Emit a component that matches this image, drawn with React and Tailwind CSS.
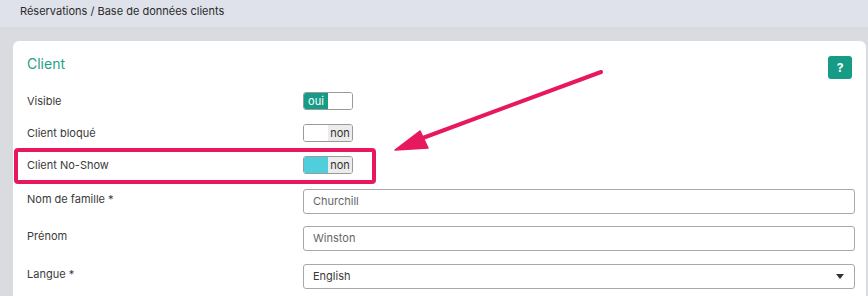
// Client form with annotation overlay (No-Show highlight + arrow)

function Toggle({ on, color, label }) {
  return (
    <div className="flex h-[18px] w-[50px] overflow-hidden rounded-[3px] border border-[#9a9a9a] text-[11px] leading-none">
      {on ? (
        <>
          <div className="flex w-1/2 items-center justify-center bg-[#169c86] text-white">{label}</div>
          <div className="w-1/2 bg-white" />
        </>
      ) : (
        <>
          <div className={`w-1/2 ${color}`} />
          <div className="flex w-1/2 items-center justify-center bg-[#ececec] text-[#333]">{label}</div>
        </>
      )}
    </div>
  );
}

function ToggleRow({ label, children }) {
  return (
    <div className="flex h-[32px] items-center">
      <div className="w-[276px] text-[11px] text-[#3a3a3a]">{label}</div>
      {children}
    </div>
  );
}

function InputRow({ label, value, select, className }) {
  return (
    <div className={`flex items-start ${className}`}>
      <div className="w-[276px] pt-[2px] text-[11px] text-[#3a3a3a]">{label}</div>
      <div className="flex h-[25px] flex-1 items-center justify-between rounded-[3px] border border-[#a8a8a8] bg-white pl-[9px] pr-[10px] text-[11px] text-[#666]">
        <span className={select ? 'text-[#3a3a3a]' : ''}>{value}</span>
        {select && (
          <svg width="8" height="5" viewBox="0 0 8 5">
            <path d="M0 0 L8 0 L4 5 Z" fill="#333" />
          </svg>
        )}
      </div>
    </div>
  );
}

export default function App() {
  return (
    <div className="relative h-[296px] w-[868px] overflow-hidden bg-[#d9dbe0] font-['Inter','Liberation_Sans',sans-serif]">
      {/* Breadcrumb bar */}
      <div className="flex h-[27px] items-center bg-[#dfe2ea] px-[20px] pb-[5px] text-[11px] text-[#2b2b2b]">
        Réservations / Base de données clients
      </div>

      {/* Card */}
      <div className="ml-[13px] mr-[2px] mt-[14px] h-[300px] rounded-[6px] bg-white pl-[14px] pr-[11px] pt-[14px]">
        <div className="flex items-start justify-between">
          <div className="mt-[-2px] text-[14px] text-[#1e9f86]">Client</div>
          <button className="mr-[3px] mt-[1px] flex h-[23px] w-[24px] items-center justify-center rounded-[3px] bg-[#169c86] text-[12px] font-bold text-white">
            ?
          </button>
        </div>

        <div className="mt-[6px]">
          <ToggleRow label="Visible">
            <Toggle on label="oui" />
          </ToggleRow>
          <ToggleRow label="Client bloqué">
            <Toggle color="bg-white" label="non" />
          </ToggleRow>
          <ToggleRow label="Client No-Show">
            <Toggle color="bg-[#4fcfdb]" label="non" />
          </ToggleRow>
        </div>

        <InputRow className="mt-[8px] h-[37px]" label="Nom de famille *" value="Churchill" />
        <InputRow className="h-[38px]" label="Prénom" value="Winston" />
        <InputRow className="h-[38px]" label="Langue *" value="English" select />
      </div>

      {/* Highlight box */}
      <div className="absolute left-[14px] top-[148px] h-[36px] w-[362px] rounded-[4px] border-[4px] border-[#e8185f]" />

      {/* Arrow */}
      <svg className="absolute left-0 top-0" width="868" height="296">
        <line x1="601" y1="72" x2="412" y2="142" stroke="#e8185f" strokeWidth="4" strokeLinecap="round" />
        <path d="M395 150 L420 131 L428 148 Z" fill="#e8185f" stroke="#e8185f" strokeWidth="1.5" strokeLinejoin="round" />
      </svg>
    </div>
  );
}
